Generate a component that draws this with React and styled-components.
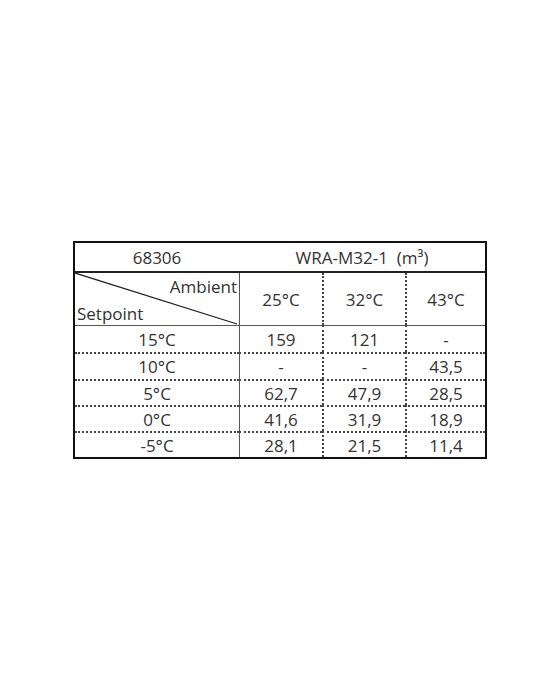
import React from "react";
import styled, { createGlobalStyle } from "styled-components";

const Global = createGlobalStyle`
  html, body { margin: 0; padding: 0; background: #fff; }
  body { font-family: "Open Sans", "DejaVu Sans", sans-serif; }
`;

const Page = styled.div`
  width: 560px;
  height: 700px;
  padding: 241px 0 0 73px;
  box-sizing: border-box;
`;

const Table = styled.div`
  width: 414px;
  box-sizing: border-box;
  border: 2px solid #111;
  display: grid;
  grid-template-columns: 164px 83px 83px 80px;
  color: #333;
  font-size: 17px;
`;

const Cell = styled.div`
  display: flex;
  align-items: center;
  justify-content: center;
  box-sizing: border-box;
  height: ${(p) => p.$h}px;
  grid-column: ${(p) => p.$span || "auto"};
  border-left: ${(p) =>
    p.$left === "solid" ? "1px solid #555" : p.$left === "dot" ? "2px dotted #444" : "none"};
  border-top: ${(p) =>
    p.$top === "solid" ? "1px solid #555" : p.$top === "dot" ? "2px dotted #444" : "none"};
  line-height: 1;
`;

const HeadRow = styled(Cell)`
  border-bottom: 2px solid #222;
`;

const CornerCell = styled.div`
  position: relative;
  height: 52px;
  box-sizing: border-box;
`;

const Ambient = styled.span`
  position: absolute;
  right: 2px;
  top: 2px;
`;

const Setpoint = styled.span`
  position: absolute;
  left: 2px;
  top: 29px;
`;

const Diag = styled.svg`
  position: absolute;
  left: 0;
  top: 0;
`;

const temps = ["25°C", "32°C", "43°C"];
const rows = [
  ["15°C", "159", "121", "-"],
  ["10°C", "-", "-", "43,5"],
  ["5°C", "62,7", "47,9", "28,5"],
  ["0°C", "41,6", "31,9", "18,9"],
  ["-5°C", "28,1", "21,5", "11,4"],
];
const heights = [27, 27, 26, 26, 26];

export default function App() {
  return (
    <>
      <Global />
      <Page>
        <Table>
          <HeadRow $h={30}>68306</HeadRow>
          <HeadRow $h={30} $span="2 / 5">WRA-M32-1&nbsp;&nbsp;(m³)</HeadRow>

          <CornerCell>
            <Diag width="164" height="52" viewBox="0 0 164 52">
              <line x1="0" y1="0" x2="162" y2="51" stroke="#222" strokeWidth="1.3" />
            </Diag>
            <Ambient>Ambient</Ambient>
            <Setpoint>Setpoint</Setpoint>
          </CornerCell>
          {temps.map((t, i) => (
            <Cell key={t} $h={52} $left={i === 0 ? "solid" : "dot"}>
              {t}
            </Cell>
          ))}

          {rows.map((r, ri) =>
            r.map((v, ci) => (
              <Cell
                key={ri + "-" + ci}
                $h={heights[ri]}
                $top={ri === 0 ? "solid" : "dot"}
                $left={ci === 0 ? "none" : ci === 1 ? "solid" : "dot"}
              >
                {v}
              </Cell>
            ))
          )}
        </Table>
      </Page>
    </>
  );
}
